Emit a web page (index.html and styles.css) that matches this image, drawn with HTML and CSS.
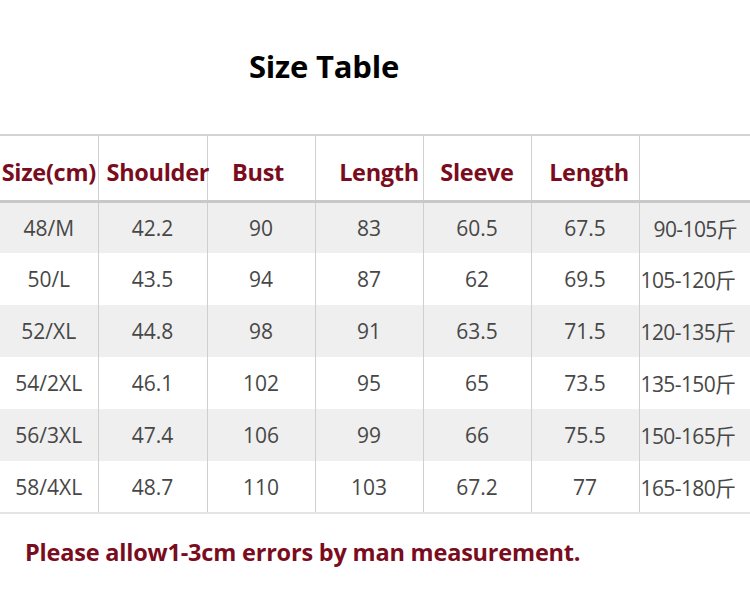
FILE: index.html
```html
<!DOCTYPE html>
<html>
<head>
<meta charset="utf-8">
<link rel="stylesheet" href="styles.css">
</head>
<body>
<div class="page">
  <h1 class="title">Size Table</h1>
  <table class="sizes">
    <colgroup>
      <col class="c0"><col class="c1"><col class="c2"><col class="c3"><col class="c4"><col class="c5"><col class="c6">
    </colgroup>
    <thead>
      <tr>
        <th>Size(cm)</th><th>Shoulder</th><th>Bust</th><th>Length</th><th>Sleeve</th><th>Length</th><th></th>
      </tr>
    </thead>
    <tbody>
      <tr class="alt"><td>48/M</td><td>42.2</td><td>90</td><td>83</td><td>60.5</td><td>67.5</td><td>90-105斤</td></tr>
      <tr><td>50/L</td><td>43.5</td><td>94</td><td>87</td><td>62</td><td>69.5</td><td>105-120斤</td></tr>
      <tr class="alt"><td>52/XL</td><td>44.8</td><td>98</td><td>91</td><td>63.5</td><td>71.5</td><td>120-135斤</td></tr>
      <tr><td>54/2XL</td><td>46.1</td><td>102</td><td>95</td><td>65</td><td>73.5</td><td>135-150斤</td></tr>
      <tr class="alt"><td>56/3XL</td><td>47.4</td><td>106</td><td>99</td><td>66</td><td>75.5</td><td>150-165斤</td></tr>
      <tr><td>58/4XL</td><td>48.7</td><td>110</td><td>103</td><td>67.2</td><td>77</td><td>165-180斤</td></tr>
    </tbody>
  </table>
  <p class="note">Please allow1-3cm errors by man measurement.</p>
</div>
</body>
</html>
```
FILE: styles.css
```css
html, body {
  margin: 0;
  padding: 0;
  background: #fff;
}
.page {
  width: 750px;
  height: 595px;
  overflow: hidden;
  font-family: "Open Sans", "Noto Sans CJK SC", sans-serif;
}
.title {
  margin: 0;
  padding-top: 45px;
  height: 134px;
  box-sizing: border-box;
  font-size: 31px;
  line-height: 42px;
  font-weight: 700;
  color: #000;
  text-align: center;
  padding-right: 102px;
  letter-spacing: -0.2px;
}
.sizes {
  width: 750px;
  border-collapse: collapse;
  table-layout: fixed;
}
.c0 { width: 98px; }
.c1 { width: 109px; }
.c2 { width: 108px; }
.c3 { width: 108px; }
.c4 { width: 108px; }
.c5 { width: 108px; }
.c6 { width: 111px; }
.sizes thead tr {
  height: 66px;
  border-top: 2px solid #d4d4d4;
  border-bottom: 3px solid #c8c8c8;
}
.sizes th {
  font-size: 23.5px;
  font-weight: 700;
  color: #7a0c20;
  padding: 0;
  padding-top: 8px;
  text-align: center;
  white-space: nowrap;
  letter-spacing: -0.3px;
  border-left: 1px solid #d2d2d2;
}
.sizes th:nth-child(2) {
  padding-left: 8px;
}
.sizes th:nth-child(3) {
  padding-right: 6px;
}
.sizes th:nth-child(4) {
  padding-left: 20px;
}
.sizes th:nth-child(6) {
  padding-left: 8px;
}
.sizes th:first-child, .sizes td:first-child {
  border-left: none;
}
.sizes tbody tr {
  height: 52px;
}
.sizes tbody tr:last-child {
  height: 52px;
  border-bottom: 2px solid #e4e4e4;
}
.sizes tr.alt {
  background: #efefef;
}
.sizes td {
  font-size: 21px;
  color: #474747;
  padding: 0;
  text-align: center;
  white-space: nowrap;
  border-left: 1px solid #cfcfcf;
}
.sizes td:last-child {
  overflow: visible;
  text-align: left;
  padding-left: 1px;
  letter-spacing: -0.6px;
}
.sizes tr:first-child td:last-child {
  padding-left: 14px;
}
.note {
  margin: 0;
  padding-top: 22px;
  padding-left: 25px;
  font-size: 23.5px;
  font-weight: 700;
  color: #7a0c20;
  letter-spacing: -0.2px;
}
```
